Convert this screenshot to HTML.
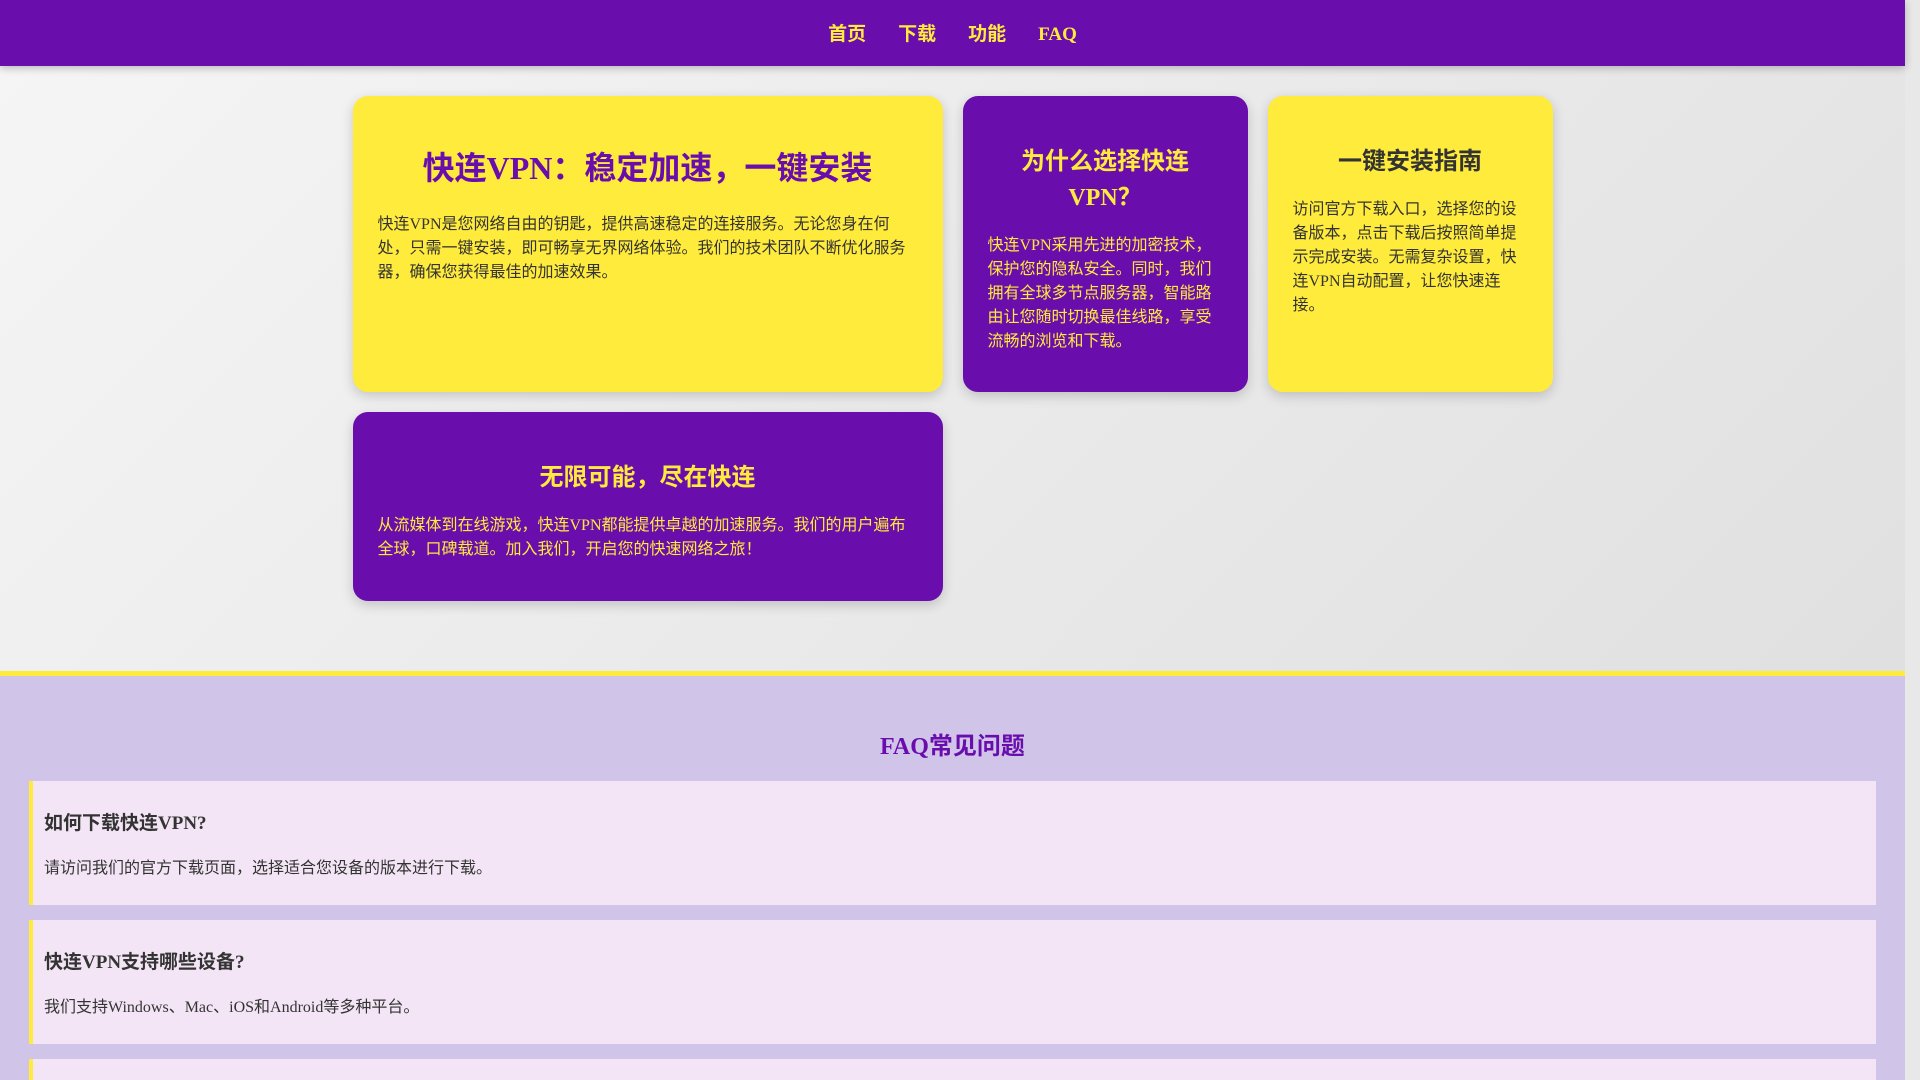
<!DOCTYPE html>
<html><head><meta charset="utf-8"><style>
*{box-sizing:border-box}
html,body{margin:0;padding:0}
html{overflow:hidden;height:1080px}
body{width:1905px;font-family:"Liberation Serif","Noto Sans CJK SC",serif;font-size:16px;line-height:1.5;background:#e8e8e8;overflow:hidden;height:1080px}
nav{background:#6a0dad;height:66px;display:flex;justify-content:center;align-items:center;box-shadow:0 2px 8px rgba(0,0,0,.25);position:relative;padding-top:4px}
nav a{color:#ffeb3b;font-weight:bold;font-size:19px;margin:0 16px;text-decoration:none}
.hero{background:linear-gradient(135deg,#f5f5f5,#e0e0e0);height:605px;padding-top:30px}
.grid{width:1200px;margin:0 auto;display:grid;grid-template-columns:repeat(4,285px);gap:20px 20px;align-items:start;position:relative}
.card{border-radius:15px;padding:25px;box-shadow:0 4px 12px rgba(0,0,0,.18)}
.y{background:#ffeb3b;color:#333}
.p{background:#6a0dad;color:#ffeb3b}
.span2{grid-column:span 2}
h1{font-size:32px;color:#6a0dad;text-align:center;margin:23px 0 21px;line-height:1.5}
h2{font-size:24px;text-align:center;margin:23px 0 18px;line-height:1.5}
.y h2{color:#333}
p{margin:16px 0}
.faq{background:#d1c4e9;border-top:5px solid #ffeb3b;padding:29px 29px 0}
.faq h2{color:#6a0dad;margin:24px 0 16px;font-size:24px}
.item{background:#f3e5f5;border-left:4px solid #ffeb3b;padding:16px 11px;margin-bottom:15px;height:124px}
.item h3{font-size:19px;margin:13px 0 18px;color:#333;line-height:1.5}
.item p{margin:0;color:#333}
</style></head><body>
<nav><a>首页</a><a>下载</a><a>功能</a><a>FAQ</a></nav>
<div class="hero"><div class="grid">
<div class="card y span2" style="height:296px"><h1>快连VPN：稳定加速，一键安装</h1><p>快连VPN是您网络自由的钥匙，提供高速稳定的连接服务。无论您身在何处，只需一键安装，即可畅享无界网络体验。我们的技术团队不断优化服务器，确保您获得最佳的加速效果。</p></div>
<div class="card p" style="height:296px"><h2>为什么选择快连VPN？</h2><p>快连VPN采用先进的加密技术，保护您的隐私安全。同时，我们拥有全球多节点服务器，智能路由让您随时切换最佳线路，享受流畅的浏览和下载。</p></div>
<div class="card y" style="height:296px"><h2>一键安装指南</h2><p>访问官方下载入口，选择您的设备版本，点击下载后按照简单提示完成安装。无需复杂设置，快连VPN自动配置，让您快速连接。</p></div>
<div class="card p span2" style="height:189px"><h2>无限可能，尽在快连</h2><p>从流媒体到在线游戏，快连VPN都能提供卓越的加速服务。我们的用户遍布全球，口碑载道。加入我们，开启您的快速网络之旅！</p></div>
</div></div>
<div class="faq"><h2 style="text-align:center">FAQ常见问题</h2>
<div class="item"><h3>如何下载快连VPN?</h3><p>请访问我们的官方下载页面，选择适合您设备的版本进行下载。</p></div>
<div class="item"><h3>快连VPN支持哪些设备?</h3><p>我们支持Windows、Mac、iOS和Android等多种平台。</p></div>
<div class="item"><h3>快连VPN安全吗?</h3><p>我们采用先进的加密技术，保护您的隐私安全。</p></div>
</div>
</body></html>
